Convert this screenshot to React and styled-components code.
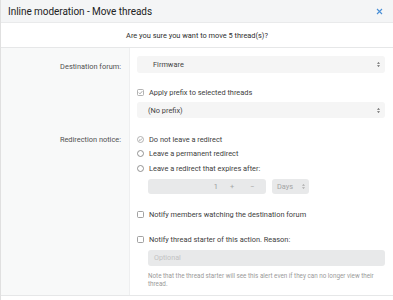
import React from "react";
import styled, { createGlobalStyle } from "styled-components";

const Global = createGlobalStyle`
  html, body { margin: 0; padding: 0; background: #fff; }
  body { font-family: Roboto, "Liberation Sans", Arial, sans-serif; color: #3b3b3b; }
`;

const Modal = styled.div`
  width: 393px;
  height: 300px;
  overflow: hidden;
  background: #fff;
  border-left: 1px solid #e0e0e0;
  box-sizing: border-box;
`;

const Header = styled.div`
  height: 22px;
  display: flex;
  align-items: center;
  justify-content: space-between;
  padding: 0 10px 0 7px;
  background: #f4f5f6;
  border-bottom: 1px solid #e9eaeb;
`;

const Title = styled.div`
  font-size: 10px;
  color: #222;
  letter-spacing: -0.05px;
`;

const Close = styled.span`
  display: flex;
  color: #4a8fd6;
`;

const Question = styled.div`
  height: 24px;
  display: flex;
  align-items: center;
  justify-content: center;
  font-size: 7.4px;
  color: #2e2e2e;
  border-bottom: 1px solid #e6e7e8;
`;

const Form = styled.div`
  display: grid;
  grid-template-columns: 129px 1fr;
  border-bottom: 1px solid #e6e7e8;
`;

const Label = styled.div`
  background: #f8f9f9;
  border-right: 1px solid #eeeff0;
  text-align: right;
  font-size: 7.4px;
  color: #505050;
  padding: ${(p) => p.$pt || 0}px 8px 0 0;
  line-height: ${(p) => p.$lh || 12}px;
`;

const Cell = styled.div`
  padding: ${(p) => p.$pt || 0}px 8px ${(p) => p.$pb || 0}px 7px;
  display: flex;
  flex-direction: column;
`;

const Select = styled.div`
  height: ${(p) => p.$h || 17}px;
  margin-top: ${(p) => p.$mt || 0}px;
  background: #f5f5f5;
  border-radius: 3px;
  display: flex;
  align-items: center;
  justify-content: space-between;
  padding: 0 4px 0 ${(p) => p.$pl || 16}px;
  font-size: 7.4px;
  color: #444;
`;

const Choice = styled.div`
  display: flex;
  align-items: center;
  gap: 5px;
  height: ${(p) => p.$h || 12}px;
  font-size: 7.4px;
  color: #404040;
`;

const Indent = styled.div`
  padding-left: 11px;
  margin-top: ${(p) => p.$mt || 0}px;
  display: flex;
  gap: 6px;
`;

const NumberBox = styled.div`
  width: 118px;
  height: 15px;
  background: #e8e9ea;
  border-radius: 3px;
  display: flex;
  align-items: center;
  justify-content: flex-end;
  padding-right: 4px;
  box-sizing: border-box;
  font-size: 7.4px;
  color: #9a9a9a;
`;

const NumVal = styled.span`
  width: 14px;
  text-align: right;
  margin-right: 4px;
`;

const Step = styled.span`
  width: 20px;
  text-align: center;
  color: #a6a6a6;
`;

const DaysBox = styled.div`
  width: 37px;
  height: 15px;
  background: #e8e9ea;
  border-radius: 3px;
  display: flex;
  align-items: center;
  justify-content: space-between;
  padding: 0 3px 0 5px;
  box-sizing: border-box;
  font-size: 7.4px;
  color: #a4a4a4;
`;

const TextArea = styled.div`
  flex: 1;
  height: 16px;
  background: #e8e9ea;
  border-radius: 3px;
  display: flex;
  align-items: center;
  padding-left: 6px;
  font-size: 7.2px;
  color: #c2c2c2;
`;

const Note = styled.div`
  margin-top: ${(p) => p.$mt || 0}px;
  padding-left: 11px;
  padding-right: 8px;
  font-size: 6.3px;
  line-height: 8.5px;
  color: #9a9a9a;
`;

const Arrows = ({ color = "#666" }) => (
  <svg width="5" height="7" viewBox="0 0 5 7">
    <path d="M1 2.8 L2.5 1 L4 2.8 Z M1 4.2 L2.5 6 L4 4.2 Z" fill={color} />
  </svg>
);

const Box = ({ checked }) => (
  <svg width="7" height="7" viewBox="0 0 7 7">
    <rect x="0.5" y="0.5" width="6" height="6" rx="1" fill="none" stroke={checked ? "#a0a0a0" : "#8a8a8a"} strokeWidth="0.8" />
    {checked && <path d="M1.8 3.6 L3 4.8 L5.3 2.2" fill="none" stroke="#8f8f8f" strokeWidth="0.8" />}
  </svg>
);

const Radio = ({ checked }) => (
  <svg width="7" height="7" viewBox="0 0 7 7">
    <circle cx="3.5" cy="3.5" r="3" fill="none" stroke={checked ? "#a0a0a0" : "#7a7a7a"} strokeWidth="0.8" />
    {checked && <path d="M2 3.6 L3.1 4.6 L5 2.5" fill="none" stroke="#8f8f8f" strokeWidth="0.8" />}
  </svg>
);

const CloseIcon = () => (
  <svg width="7" height="7" viewBox="0 0 7 7">
    <path d="M1 1 L6 6 M6 1 L1 6" stroke="currentColor" strokeWidth="1.1" />
  </svg>
);

export default function App() {
  return (
    <Modal>
      <Global />
      <Header>
        <Title>Inline moderation - Move threads</Title>
        <Close><CloseIcon /></Close>
      </Header>
      <Question>Are you sure you want to move 5 thread(s)?</Question>
      <Form>
        <Label $pt={10} $lh={17}>Destination forum:</Label>
        <Cell $pt={8} $pb={7}>
          <Select>
            <span>Firmware</span>
            <Arrows />
          </Select>
        </Cell>

        <Label />
        <Cell $pt={6} $pb={6}>
          <Choice><Box checked />Apply prefix to selected threads</Choice>
          <Select $mt={4} $h={16} $pl={11}>
            <span>(No prefix)</span>
            <Arrows />
          </Select>
        </Cell>

        <Label $pt={9} $lh={13}>Redirection notice:</Label>
        <Cell $pt={8} $pb={0}>
          <Choice $h={14.5}><Radio checked />Do not leave a redirect</Choice>
          <Choice $h={14.5}><Radio />Leave a permanent redirect</Choice>
          <Choice $h={14.5}><Radio />Leave a redirect that expires after:</Choice>
          <Indent $mt={3}>
            <NumberBox>
              <NumVal>1</NumVal>
              <Step>+</Step>
              <Step>−</Step>
            </NumberBox>
            <DaysBox>
              <span>Days</span>
              <Arrows color="#aaa" />
            </DaysBox>
          </Indent>
        </Cell>

        <Label />
        <Cell $pt={15} $pb={0}>
          <Choice><Box />Notify members watching the destination forum</Choice>
        </Cell>

        <Label />
        <Cell $pt={13} $pb={6}>
          <Choice><Box />Notify thread starter of this action. Reason:</Choice>
          <Indent $mt={4}>
            <TextArea>Optional</TextArea>
          </Indent>
          <Note $mt={6}>
            Note that the thread starter will see this alert even if they can no longer view their thread.
          </Note>
        </Cell>
      </Form>
    </Modal>
  );
}
